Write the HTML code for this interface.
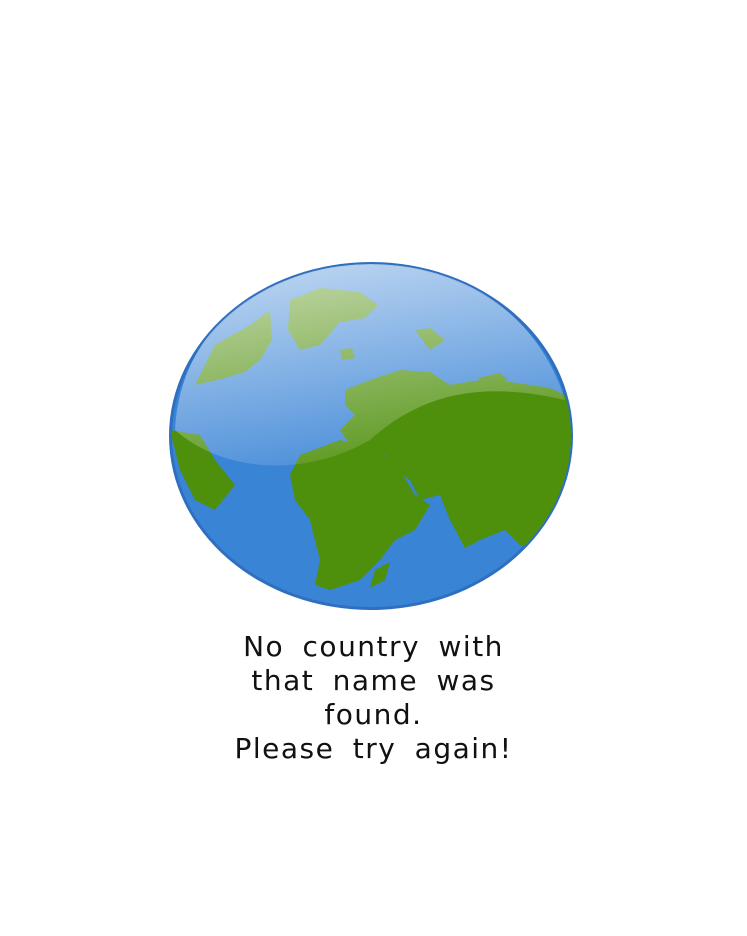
<!DOCTYPE html>
<html><head><meta charset="utf-8"><style>
html,body{margin:0;padding:0;background:#fff;width:747px;height:936px;overflow:hidden}
svg{position:absolute;left:0;top:0}
.t{position:absolute;left:0;width:747px;top:630px;text-align:center;font-family:"DejaVu Sans","Liberation Sans",sans-serif;font-size:28px;line-height:34px;letter-spacing:1.5px;word-spacing:8px;color:#111}
</style></head><body>
<svg width="747" height="936" viewBox="0 0 747 936">
<defs>
<clipPath id="c"><ellipse cx="371" cy="436" rx="200" ry="172"/></clipPath>
<linearGradient id="h" x1="0" y1="0" x2="0.3" y2="1">
<stop offset="0" stop-color="#fff" stop-opacity="0.7"/><stop offset="1" stop-color="#fff" stop-opacity="0.12"/></linearGradient>
</defs>
<ellipse cx="371" cy="436" rx="202" ry="174" fill="#2f6fc0"/>
<ellipse cx="371" cy="436" rx="199" ry="171" fill="#3a84d6"/>
<g clip-path="url(#c)" fill="#4e8f0b">
<path d="M290 300 L320 288 L360 292 L378 305 L365 318 L340 322 L320 345 L300 350 L288 330 Z"/>
<path d="M195 385 L215 345 L250 325 L270 310 L272 340 L260 360 L245 372 L225 378 Z"/>
<path d="M170 430 L200 435 L215 460 L235 485 L215 510 L195 500 L180 470 Z"/>
<path d="M345 390 L370 380 L400 370 L430 372 L450 385 L480 380 L510 382 L550 388 L575 400 L575 560 L520 545 L505 530 L480 540 L465 548 L450 520 L440 495 L420 500 L410 480 L395 470 L385 455 L370 450 L350 445 L340 430 L355 415 L345 405 Z"/>
<path d="M300 455 L340 440 L380 452 L400 470 L415 495 L430 505 L415 530 L395 540 L380 560 L360 580 L330 590 L315 585 L320 560 L310 520 L295 500 L290 475 Z"/>
<path d="M375 570 L390 562 L385 580 L370 588 Z"/>
<path d="M415 330 L430 328 L445 340 L430 350 Z"/>
<path d="M340 350 L352 348 L355 358 L342 360 Z"/>
<path d="M478 378 L500 373 L508 380 L490 385 Z"/>
</g>
<g clip-path="url(#c)">
<path d="M175 430 C180 330 260 265 370 264 C470 264 540 320 565 400 C480 380 420 395 370 440 C300 480 220 470 175 430 Z" fill="url(#h)"/>
</g>
</svg>
<div class="t">No country with<br>that name was<br>found.<br>Please try again!</div>
</body></html>
